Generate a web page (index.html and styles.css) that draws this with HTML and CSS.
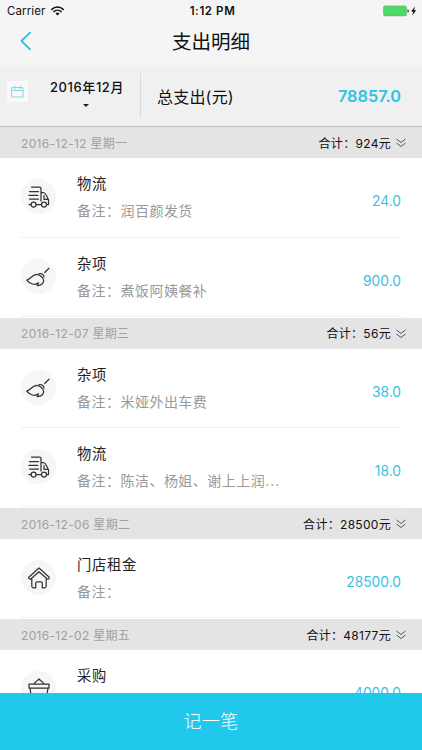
FILE: index.html
```html
<!DOCTYPE html>
<html lang="zh-CN">
<head>
<meta charset="utf-8">
<title>支出明细</title>
<link rel="stylesheet" href="styles.css">
</head>
<body>
<svg class="defs" width="0" height="0">
  <symbol id="truck" viewBox="0 0 35 35"><path d="M10.500 8H18.500q1.500 0 1.500 1.500V22M8.500 12.500h9M7.800 16.300h9M8.500 20h9M20 13.500h2.500q1.500.3 3 3.200l2 4v4.800h-1.700M23 16.500v3.800h4.200M8 25.500h2M15.200 25.500h5.200"/><circle cx="12.600" cy="25.500" r="2.500"/><circle cx="23" cy="25.500" r="2.500"/></symbol>
  <symbol id="broom" viewBox="0 0 35 35"><path d="M28 9.300l-4.300 4.200M5.700 21.200C9 20.200 11 16.200 15.500 15.400C19 15.600 22.400 18.500 22.700 21.700C22.200 24.800 19.500 26.800 16.200 26.600L17.500 23.800C15.500 25.300 13.500 25.600 11.500 25C8.800 24.300 7 23 5.700 21.200zM18 14.600Q22.500 14 23 18"/></symbol>
  <symbol id="house" viewBox="0 0 35 35"><path d="M18 8L8 17q-.8 1 .2 1.700t1.800 0L18 11.700l8 7q1 .7 1.800 0t.2-1.700zM10.800 19v7q0 1.800 1.700 1.800h2.200v-4.500q0-1.500 1.500-1.500h3.600q1.500 0 1.500 1.500v4.500h2.200q1.700 0 1.700-1.800v-7"/></symbol>
  <symbol id="basket" viewBox="0 0 35 35"><path d="M8 13h20v4H8zM13 13q1-2 3.500-3.500L18 8l1.500 1.500q2.500 1.500 3.500 3.500M9 17l1.500 10h15L27 17"/></symbol>
  <symbol id="more" viewBox="0 0 10 10"><path d="M.8 1.200L5 4.500l4.200-3.300M.8 5.200L5 8.500l4.200-3.300"/></symbol>
</svg>
<div class="app">
  <div class="status">
    <div class="carrier">Carrier
      <svg class="wifi" viewBox="0 0 13 10"><path d="M.8 3.400a8.200 8.200 0 0 1 11.400 0M2.900 5.600a5.200 5.200 0 0 1 7.200 0"/><path class="fill" d="M4.500 7.400a2.900 2.900 0 0 1 4 0l-2 2.100z"/></svg>
    </div>
    <div class="clock">1:12 PM</div>
    <div class="power">
      <svg width="35" height="12" viewBox="0 0 35 12"><rect x=".5" y=".9" width="23" height="10" rx="1.500" fill="#4cd964" stroke="#76a681" stroke-width=".6"/><path d="M24.500 4.200q1.300.2 1.300 1.700t-1.300 1.700z" fill="#222"/><path d="M32 1.500l-4 5h2.200l-1 4 4-5.200H31z" fill="#111"/></svg>
    </div>
  </div>
  <div class="nav">
    <svg class="back" viewBox="0 0 12 20"><path d="M10.500 1.200L1.500 10l9 8.800"/></svg>
    <h1>支出明细</h1>
  </div>
  <div class="summary">
    <div class="calendar"><svg width="13" height="13" viewBox="0 0 13 13"><path d="M1 2.500h11v9.500H1zM1 5.500h11M3.800 1v3M9.200 1v3"/></svg></div>
    <div class="month"><span>2016年12月</span><i class="caret"></i></div>
    <div class="label">总支出(元)</div>
    <div class="total">78857.0</div>
  </div>
  <main class="list">
    <section class="group">
      <header><span class="date">2016-12-12 星期一</span><span class="sum">合计：924元</span><svg class="more"><use href="#more"/></svg></header>
      <article class="row"><svg class="icon"><use href="#truck"/></svg><div class="info"><h2>物流</h2><p>备注：润百颜发货</p></div><div class="amount">24.0</div></article>
      <article class="row"><svg class="icon"><use href="#broom"/></svg><div class="info"><h2>杂项</h2><p>备注：煮饭阿姨餐补</p></div><div class="amount">900.0</div></article>
    </section>
    <section class="group">
      <header><span class="date">2016-12-07 星期三</span><span class="sum">合计：56元</span><svg class="more"><use href="#more"/></svg></header>
      <article class="row"><svg class="icon"><use href="#broom"/></svg><div class="info"><h2>杂项</h2><p>备注：米娅外出车费</p></div><div class="amount">38.0</div></article>
      <article class="row"><svg class="icon"><use href="#truck"/></svg><div class="info"><h2>物流</h2><p>备注：陈洁、杨姐、谢上上润<span class="dots">...</span></p></div><div class="amount">18.0</div></article>
    </section>
    <section class="group">
      <header><span class="date">2016-12-06 星期二</span><span class="sum">合计：28500元</span><svg class="more"><use href="#more"/></svg></header>
      <article class="row"><svg class="icon"><use href="#house"/></svg><div class="info"><h2>门店租金</h2><p>备注：</p></div><div class="amount">28500.0</div></article>
    </section>
    <section class="group">
      <header><span class="date">2016-12-02 星期五</span><span class="sum">合计：48177元</span><svg class="more"><use href="#more"/></svg></header>
      <article class="row"><svg class="icon"><use href="#basket"/></svg><div class="info"><h2>采购</h2></div><div class="amount">4000.0</div></article>
    </section>
  </main>
  <footer class="add">记一笔</footer>
</div>
</body>
</html>
```
FILE: styles.css
```css
* { box-sizing: border-box; margin: 0; padding: 0; }
body { font-family: Inter, "Noto Sans CJK SC", sans-serif; color: #111; background: #fff; }
svg { fill: none; stroke-linecap: round; stroke-linejoin: round; flex: none; }
.defs { display: none; }
.app { width: 422px; height: 750px; display: flex; flex-direction: column; overflow: hidden; }
.status { height: 21px; flex: none; background: #f5f5f5; display: grid; grid-template-columns: 1fr auto 1fr; align-items: center; padding: 1px 4px 0 7px; font-size: 11.500px; line-height: 20px; }
.carrier { display: flex; align-items: center; gap: 6px; letter-spacing: .1px; }
.wifi { width: 13px; height: 10px; stroke: #111; stroke-width: 1.500; }
.wifi .fill { fill: #111; stroke: none; }
.clock { font-weight: 600; letter-spacing: .6px; }
.power { display: flex; justify-content: flex-end; }
.nav { height: 44px; flex: none; background: #f5f5f5; display: grid; grid-template-columns: 40px 1fr 40px; align-items: center; padding-bottom: 2px; }
.back { width: 12px; height: 20px; margin: 0 0 2px 20px; stroke: #2bbfe3; stroke-width: 1.800; stroke-linecap: butt; }
h1 { font-size: 19.500px; line-height: 40px; font-weight: 400; text-align: center; }
.summary { height: 62px; flex: none; background: #f0f0f0; border-bottom: 1px solid #bdbdbd; display: flex; align-items: center; padding: 0 21px 0 7px; }
.calendar { width: 21px; height: 21px; margin-bottom: 8px; background: #f8f9f9; display: flex; align-items: center; justify-content: center; }
.calendar svg { stroke: #8bd5e9; stroke-width: 1; }
.month { width: 113px; height: 45px; border-right: 1px solid #d9d9d9; display: flex; flex-direction: column; align-items: center; font-size: 13px; font-weight: 500; letter-spacing: .6px; line-height: 20px; padding: 4px 0 0 6px; }
.month span { white-space: nowrap; }
.caret { border: 3px solid transparent; border-top-color: #222; margin: 7px 3px 0 0; }
.label { font-size: 16px; margin-left: 16px; flex: 1; letter-spacing: .2px; }
.total { color: #2ec2e5; font-size: 16.300px; font-weight: 600; }
.list { flex: 1; min-height: 0; overflow: hidden; padding-top: .4px; }
.group { padding-bottom: .8px; }
.group header { height: 31px; background: #e4e4e4; display: flex; align-items: center; padding: 2px 16px 0 21px; font-size: 12px; line-height: 18px; }
.date { color: #a0a0a0; flex: 1; letter-spacing: .32px; }
.sum { letter-spacing: .3px; }
.more { width: 10px; height: 10px; margin: 0 0 1px 5px; stroke: #555; stroke-width: 1; }
.row { height: 79.300px; margin: 0 20px 0 21px; border-bottom: 1px solid #f0f0f0; display: flex; align-items: flex-start; }
.icon { width: 35px; height: 35px; margin-top: 21px; border-radius: 50%; background: #f6f6f8; stroke: #333; stroke-width: 1.250; }
.info { margin-left: 21px; flex: 1; padding-top: 15px; white-space: nowrap; }
h2 { font-size: 14.300px; font-weight: 400; line-height: 22px; letter-spacing: .7px; color: #222; }
.info p { font-size: 14px; line-height: 20px; letter-spacing: .48px; color: #999; margin-top: 6px; }
.dots { letter-spacing: 1px; }
.amount { color: #3bbfdf; font-size: 13.800px; line-height: 20px; margin: 33px 1px 0 0; }
.add { height: 57px; flex: none; background: #20c8ec; color: #fff; font-size: 18px; font-weight: 300; letter-spacing: .4px; line-height: 57px; text-align: center; }
```
